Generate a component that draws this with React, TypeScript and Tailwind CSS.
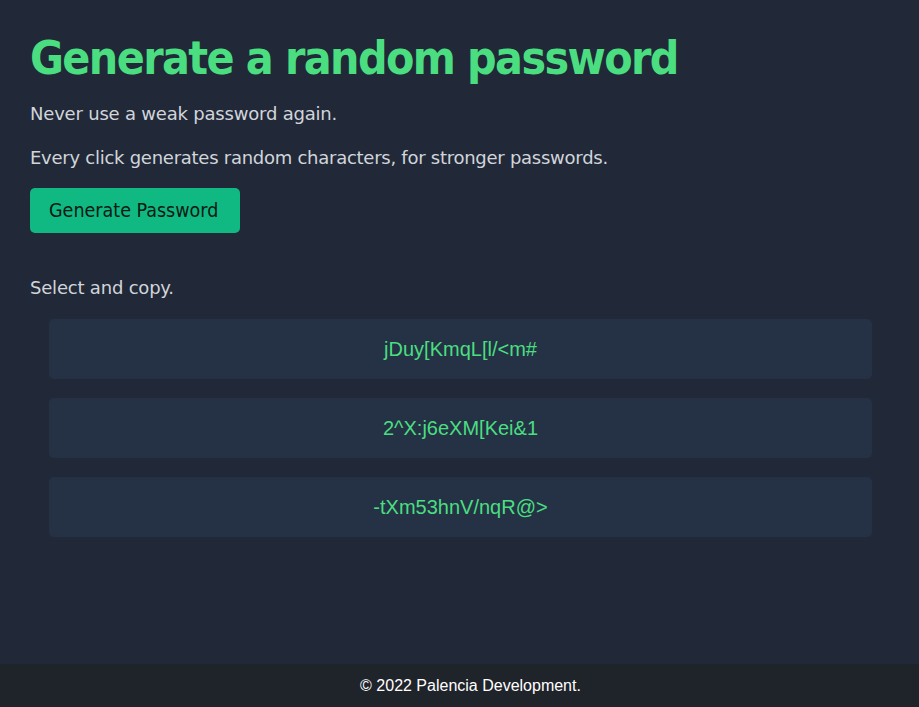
const passwords = ["jDuy[KmqL[l/<m#", "2^X:j6eXM[Kei&1", "-tXm53hnV/nqR@>"];

export default function App() {
  return (
    <div className="min-h-[707px] flex flex-col bg-[#212938] font-['DejaVu_Sans',sans-serif]">
      <main className="flex-1 px-[30px] pt-[28px]">
        <h1 className="text-[46px] leading-[60px] font-bold text-[#4ade80] tracking-[-1.6px] font-['DejaVu_Sans_Condensed','DejaVu_Sans',sans-serif]">
          Generate a random password
        </h1>
        <p className="mt-[13px] text-[18px] leading-[26px] text-[#d1d5db] tracking-[-0.2px]">
          Never use a weak password again.
        </p>
        <p className="mt-[18px] text-[18px] leading-[26px] text-[#d1d5db] tracking-[-0.26px]">
          Every click generates random characters, for stronger passwords.
        </p>
        <button className="mt-[17px] h-[45px] pl-[19px] pr-[22px] rounded-[5px] bg-[#10b981] text-[19.5px] text-[#0b1a14] font-['DejaVu_Sans_Condensed','DejaVu_Sans',sans-serif]">
          Generate Password
        </button>
        <p className="mt-[42px] text-[18px] leading-[26px] text-[#d1d5db] tracking-[-0.2px]">Select and copy.</p>
        <div className="mt-[18px] ml-[19px] mr-[17px] flex flex-col gap-[19px] font-['Liberation_Sans',Arial,sans-serif]">
          {passwords.map((p) => (
            <div
              key={p}
              className="h-[60px] rounded-[5px] bg-[#253246] flex items-center justify-center text-[20px] text-[#4ade80]"
            >
              {p}
            </div>
          ))}
        </div>
      </main>
      <footer className="h-[43px] pl-[22px] bg-[#1f232a] flex items-center justify-center text-[16px] text-white font-['Liberation_Sans',Arial,sans-serif]">
        © 2022 Palencia Development.
      </footer>
    </div>
  );
}
